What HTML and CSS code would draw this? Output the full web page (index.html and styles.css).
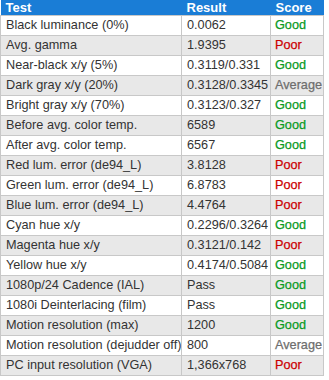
FILE: index.html
```html
<!DOCTYPE html>
<html>
<head>
<meta charset="utf-8">
<link rel="stylesheet" href="styles.css">
</head>
<body>
<table class="results">
  <colgroup>
    <col class="c-test">
    <col class="c-result">
    <col class="c-score">
  </colgroup>
  <thead>
    <tr><th>Test</th><th>Result</th><th>Score</th></tr>
  </thead>
  <tbody>
    <tr><td>Black luminance (0%)</td><td>0.0062</td><td class="good">Good</td></tr>
    <tr><td>Avg. gamma</td><td>1.9395</td><td class="poor">Poor</td></tr>
    <tr><td>Near-black x/y (5%)</td><td>0.3119/0.331</td><td class="good">Good</td></tr>
    <tr><td>Dark gray x/y (20%)</td><td>0.3128/0.3345</td><td class="avg">Average</td></tr>
    <tr><td>Bright gray x/y (70%)</td><td>0.3123/0.327</td><td class="good">Good</td></tr>
    <tr><td>Before avg. color temp.</td><td>6589</td><td class="good">Good</td></tr>
    <tr><td>After avg. color temp.</td><td>6567</td><td class="good">Good</td></tr>
    <tr><td>Red lum. error (de94_L)</td><td>3.8128</td><td class="poor">Poor</td></tr>
    <tr><td>Green lum. error (de94_L)</td><td>6.8783</td><td class="poor">Poor</td></tr>
    <tr><td>Blue lum. error (de94_L)</td><td>4.4764</td><td class="poor">Poor</td></tr>
    <tr><td>Cyan hue x/y</td><td>0.2296/0.3264</td><td class="good">Good</td></tr>
    <tr><td>Magenta hue x/y</td><td>0.3121/0.142</td><td class="poor">Poor</td></tr>
    <tr><td>Yellow hue x/y</td><td>0.4174/0.5084</td><td class="good">Good</td></tr>
    <tr><td>1080p/24 Cadence (IAL)</td><td>Pass</td><td class="good">Good</td></tr>
    <tr><td>1080i Deinterlacing (film)</td><td>Pass</td><td class="good">Good</td></tr>
    <tr><td>Motion resolution (max)</td><td>1200</td><td class="good">Good</td></tr>
    <tr><td>Motion resolution (dejudder off)</td><td>800</td><td class="avg">Average</td></tr>
    <tr><td>PC input resolution (VGA)</td><td>1,366x768</td><td class="poor">Poor</td></tr>
  </tbody>
</table>
</body>
</html>
```
FILE: styles.css
```css
html, body {
  margin: 0;
  padding: 0;
  background: #fff;
}
.results {
  border-collapse: collapse;
  table-layout: fixed;
  width: 323px;
  font-family: "Liberation Sans", Arial, sans-serif;
  font-size: 12.7px;
  color: #333;
}
.c-test { width: 181px; }
.c-result { width: 89px; }
.c-score { width: 53px; }
.results th {
  background: #1a7dd6;
  color: #fff;
  font-size: 13px;
  font-weight: bold;
  text-align: left;
  padding: 0 5px;
  height: 15px;
  line-height: 15px;
  border-bottom: 1px solid #c8c8c8;
}
.results td {
  border: 1px solid #c8c8c8;
  padding: 2px 5px;
  line-height: 15px;
  height: 15px;
  white-space: nowrap;
  overflow: hidden;
}
.results td.good,
.results td.poor,
.results td.avg {
  padding-left: 4px;
  padding-right: 0;
  -webkit-text-stroke: 0.25px currentColor;
}
.results tbody tr:nth-child(even) td {
  background: #e8e8e8;
}
.results td.good { color: #0a9a1e; }
.results td.poor { color: #cc0000; }
.results td.avg { color: #6e6e6e; }
```
